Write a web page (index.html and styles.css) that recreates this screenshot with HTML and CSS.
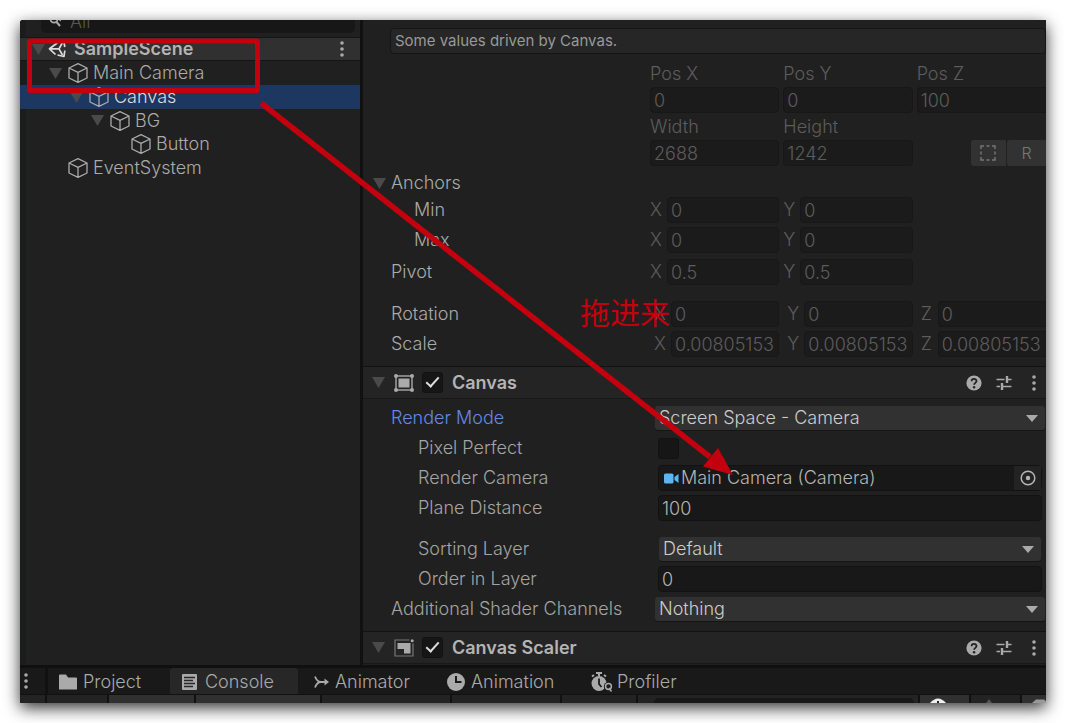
FILE: index.html
```html
<!DOCTYPE html>
<html lang="en">
<head>
<meta charset="utf-8">
<title>SampleScene</title>
<link rel="stylesheet" href="styles.css">
</head>
<body>
<svg class="defs" aria-hidden="true">
  <symbol id="cube" viewBox="0 0 20 20"><path d="M10 0.700 19 5V15L10 19.300 1 15V5ZM1 5 10 9.400 19 5M10 9.400V19" fill="none" stroke="currentColor" stroke-width="1.3" stroke-linejoin="round"/></symbol>
  <symbol id="fold" viewBox="0 0 13 11"><path d="M0 0H13L6.5 11Z" fill="currentColor"/></symbol>
  <symbol id="dots" viewBox="0 0 4 16"><g fill="currentColor"><circle cx="2" cy="2" r="1.8"/><circle cx="2" cy="8" r="1.8"/><circle cx="2" cy="14" r="1.8"/></g></symbol>
  <symbol id="help" viewBox="0 0 16 16"><circle cx="8" cy="8" r="7.6" fill="currentColor"/><path d="M5.6 6.2C5.6 3.2 10.5 3.2 10.5 6 10.5 7.9 8.1 7.8 8.1 9.8" fill="none" stroke="#222" stroke-width="1.8"/><circle cx="8.1" cy="12.2" r="1.2" fill="#222"/></symbol>
  <symbol id="preset" viewBox="0 0 16 16"><path d="M0.500 4.500H8.500M12 4.500H15.500M0.500 11.500H4M7 11.500H15.500" stroke="currentColor" stroke-width="1.6"/><path d="M11 1V8M6 8V15" stroke="currentColor" stroke-width="2.4"/></symbol>
</svg>
<main class="window">
  <div class="upper">
    <section class="hierarchy">
      <div class="search-row">
        <label class="search">
          <svg class="search-icon" viewBox="0 0 16 12"><circle cx="6" cy="3" r="3.6" fill="none" stroke="currentColor" stroke-width="1.7"/><path d="M8.500 6 12 10" stroke="currentColor" stroke-width="2"/><path d="M9.500 2H15L12.200 5.500Z" fill="currentColor"/></svg>
          <input type="text" placeholder="All" aria-label="Search">
        </label>
      </div>
      <div class="scene">
        <svg class="fold"><use href="#fold"/></svg>
        <svg class="unity" viewBox="0 0 18 18"><g fill="none" stroke="currentColor" stroke-width="1.700" stroke-linejoin="round"><path d="M9.500 2.800 1.500 8.800 7.500 14.500M1.500 8.800H11M11 8.800 14.500 2.500M11 8.800 14.500 15"/><path d="M11.500 1.800 15.800 1.200 16.800 7M16.800 10.500 16 16.500 9.500 15"/></g></svg>
        <span class="scene-name">SampleScene</span>
        <button class="icon-button" aria-label="Scene menu"><svg class="dots"><use href="#dots"/></svg></button>
      </div>
      <ul class="tree">
        <li class="node level-1"><svg class="fold"><use href="#fold"/></svg><svg class="cube"><use href="#cube"/></svg>Main Camera</li>
        <li class="node level-2 selected"><svg class="fold"><use href="#fold"/></svg><svg class="cube"><use href="#cube"/></svg>Canvas</li>
        <li class="node level-3"><svg class="fold"><use href="#fold"/></svg><svg class="cube"><use href="#cube"/></svg>BG</li>
        <li class="node level-4"><span class="fold"></span><svg class="cube"><use href="#cube"/></svg>Button</li>
        <li class="node level-1"><span class="fold"></span><svg class="cube"><use href="#cube"/></svg>EventSystem</li>
      </ul>
    </section>

    <section class="inspector">
      <div class="transform">
        <p class="note">Some values driven by Canvas.</p>
        <div class="row captions"><span></span><div class="cells"><label for="px">Pos X</label><label for="py">Pos Y</label><label for="pz">Pos Z</label></div></div>
        <div class="row tight"><span></span><div class="cells"><input id="px" value="0" disabled><input id="py" value="0" disabled><input id="pz" class="cut" value="100" disabled></div></div>
        <div class="row captions"><span></span><div class="cells"><label for="w">Width</label><label for="h">Height</label></div></div>
        <div class="row tight"><span></span><div class="cells"><input id="w" value="2688" disabled><input id="h" value="1242" disabled>
          <div class="modes"><button aria-label="Blueprint mode"><svg class="dash" viewBox="0 0 16 16"><path d="M1 4V1H4M12 1H15V4M15 12V15H12M4 15H1V12M6.500 1H9.500M6.500 15H9.500M1 6.500V9.500M15 6.500V9.500" fill="none" stroke="currentColor" stroke-width="1.400"/></svg></button><button>R</button></div></div></div>
        <div class="row"><span class="name"><svg class="fold"><use href="#fold"/></svg>Anchors</span></div>
        <div class="row near"><span class="name sub">Min</span><div class="cells"><label class="axis">X<input value="0" disabled></label><label class="axis">Y<input value="0" disabled></label></div></div>
        <div class="row"><span class="name sub">Max</span><div class="cells"><label class="axis">X<input value="0" disabled></label><label class="axis">Y<input value="0" disabled></label></div></div>
        <div class="row loose"><span class="name">Pivot</span><div class="cells"><label class="axis">X<input value="0.5" disabled></label><label class="axis">Y<input value="0.5" disabled></label></div></div>
        <div class="row apart"><span class="name">Rotation</span><div class="cells inset"><label class="axis">X<input value="0" disabled></label><label class="axis">Y<input value="0" disabled></label><label class="axis">Z<input class="cut" value="0" disabled></label></div></div>
        <div class="row"><span class="name">Scale</span><div class="cells inset"><label class="axis">X<input value="0.00805153" disabled></label><label class="axis">Y<input value="0.00805153" disabled></label><label class="axis">Z<input class="cut" value="0.00805153" disabled></label></div></div>
      </div>

      <header class="component">
        <svg class="fold"><use href="#fold"/></svg>
        <svg class="comp-icon" viewBox="0 0 20 18"><rect x="2" y="2" width="16" height="14" fill="none" stroke="currentColor" stroke-width="1.400"/><rect x="4.500" y="4.500" width="11" height="9" fill="currentColor"/><g fill="currentColor"><circle cx="2" cy="2" r="2"/><circle cx="18" cy="2" r="2"/><circle cx="2" cy="16" r="2"/><circle cx="18" cy="16" r="2"/></g></svg>
        <label class="enable"><input type="checkbox" checked>Canvas</label>
        <div class="tools"><button class="icon-button" aria-label="Help"><svg class="tool"><use href="#help"/></svg></button><button class="icon-button" aria-label="Presets"><svg class="tool"><use href="#preset"/></svg></button><button class="icon-button" aria-label="Menu"><svg class="dots"><use href="#dots"/></svg></button></div>
      </header>

      <div class="fields">
        <div class="row"><label class="name link" for="mode">Render Mode</label><div class="pick wide"><select id="mode"><option>Screen Space - Camera</option></select></div></div>
        <div class="row"><label class="name deep" for="pp">Pixel Perfect</label><div class="value"><input type="checkbox" id="pp"></div></div>
        <div class="row"><label class="name deep" for="cam">Render Camera</label><div class="value"><div class="object"><svg class="camera" viewBox="0 0 15 11"><rect width="9.500" height="10" y="0.500" rx="1.500" fill="currentColor"/><path d="M10.500 4 14.500 1V10L10.500 7Z" fill="currentColor"/></svg><input id="cam" value="Main Camera (Camera)"><button aria-label="Select camera"><svg class="target" viewBox="0 0 16 16"><circle cx="8" cy="8" r="6.800" fill="none" stroke="currentColor" stroke-width="1.500"/><circle cx="8" cy="8" r="2.200" fill="currentColor"/></svg></button></div></div></div>
        <div class="row"><label class="name deep" for="dist">Plane Distance</label><div class="value"><input id="dist" value="100"></div></div>
        <div class="row apart"><label class="name deep" for="layer">Sorting Layer</label><div class="pick"><select id="layer"><option>Default</option></select></div></div>
        <div class="row"><label class="name deep" for="order">Order in Layer</label><div class="value"><input id="order" value="0"></div></div>
        <div class="row"><label class="name" for="chan">Additional Shader Channels</label><div class="pick wide"><select id="chan"><option>Nothing</option></select></div></div>
      </div>

      <header class="component">
        <svg class="fold"><use href="#fold"/></svg>
        <svg class="comp-icon" viewBox="0 0 20 18"><path d="M15.500 1H1V17H19V4.500" fill="none" stroke="#777" stroke-width="1.200"/><path d="M3.500 4H16.500V14.500H10V10H3.500Z" fill="currentColor"/><circle cx="18.200" cy="1.800" r="1.500" fill="currentColor"/></svg>
        <label class="enable"><input type="checkbox" checked>Canvas Scaler</label>
        <div class="tools"><button class="icon-button" aria-label="Help"><svg class="tool"><use href="#help"/></svg></button><button class="icon-button" aria-label="Presets"><svg class="tool"><use href="#preset"/></svg></button><button class="icon-button" aria-label="Menu"><svg class="dots"><use href="#dots"/></svg></button></div>
      </header>
    </section>
  </div>

  <nav class="tabs">
    <button class="panel-menu" aria-label="Panel menu"><svg class="dots"><use href="#dots"/></svg></button>
    <button class="tab project"><svg class="tab-icon" viewBox="0 0 18 16"><path d="M0 1.500Q0 .5 1 .5H7L9 3.500H17Q18 3.500 18 4.500V15.500H0Z" fill="currentColor"/></svg>Project</button>
    <button class="tab console"><svg class="page-icon" viewBox="0 0 15 16"><rect width="15" height="16" rx="1" fill="currentColor"/><path d="M2 3.500H13M2 6.500H11M2 9.500H13M2 12.500H11" stroke="#272727" stroke-width="1.300"/></svg>Console</button>
    <button class="tab animator"><svg class="page-icon" viewBox="0 0 15 16"><path d="M1 2.500Q3 8 7 8H13.500M1 13.500Q3 8 7 8" fill="none" stroke="currentColor" stroke-width="1.800"/><path d="M10.500 4.500 15 8 10.500 11.500Z" fill="currentColor"/></svg>Animator</button>
    <button class="tab animation"><svg class="tab-icon" viewBox="0 0 18 18"><circle cx="9" cy="9" r="9" fill="currentColor"/><path d="M9 3V9H14.500" fill="none" stroke="#191919" stroke-width="2"/></svg>Animation</button>
    <button class="tab profiler"><svg class="watch" viewBox="0 0 22 20"><circle cx="8" cy="11.500" r="7.500" fill="currentColor"/><path d="M5 1H11M8 1V4M1 4.500 3 3M13 3 15 4.500" stroke="currentColor" stroke-width="2"/><path d="M8 6.500V12L10.500 15" fill="none" stroke="#191919" stroke-width="1.800"/><circle cx="17.500" cy="14.500" r="4.600" fill="#191919"/><circle cx="17.500" cy="14.500" r="2.900" fill="none" stroke="currentColor" stroke-width="1.500"/><path d="M18 16 20.500 19.500" stroke="currentColor" stroke-width="1.500"/></svg>Profiler</button>
  </nav>
  <div class="toolbar">
    <span class="seg s1"></span><span class="seg s2"></span><span class="seg s3 lit"></span><span class="seg s4 lit"></span><span class="seg s5"></span><span class="seg s6"></span><span class="seg s7"></span>
    <div class="log-search"><span class="log-input"></span></div>
    <span class="seg s8 lit"><svg class="count white" viewBox="0 0 16 5"><path d="M0 5Q8-4 16 5Z" fill="currentColor"/><path d="M8 3V5" stroke="#222" stroke-width="2"/></svg></span><span class="seg s8"><svg class="count faint" viewBox="0 0 16 5"><path d="M5 5 8 1 11 5Z" fill="currentColor"/></svg></span><span class="seg s9 lit"><svg class="count grey" viewBox="0 0 16 5"><path d="M0 5 4 1.500H12L16 5Z" fill="currentColor"/></svg></span>
  </div>

  <svg class="markup" viewBox="0 0 1026 683" aria-hidden="true">
    <rect x="9.500" y="21" width="228" height="49.500" rx="1" fill="none" stroke="#c4000e" stroke-width="5"/>
    <path d="M241 83 690 437" stroke="#c4000e" stroke-width="5.500"/>
    <path d="M713 455 683 446.500 698 428Z" fill="#c4000e"/>
  </svg>
  <span class="remark" lang="zh">拖进来</span>
</main>
</body>
</html>
```
FILE: styles.css
```css
* { box-sizing: border-box; }

body {
  margin: 0;
  padding: 20px;
  min-height: 100vh;
  display: flex;
  background: #fff;
  color: #aaa;
  font: 300 18px/24px Inter, "Noto Sans", sans-serif;
}

button, input, select { font: inherit; color: inherit; margin: 0; padding: 0; border: 0; background: none; }
svg { flex: none; display: block; }
.defs { position: absolute; width: 0; height: 0; }

.window {
  position: relative;
  flex: 1;
  min-width: 0;
  display: flex;
  flex-direction: column;
  border-radius: 3px 3px 0 0;
  background: #111;
  box-shadow: 0 5px 16px rgba(0, 0, 0, .8);
}
.upper { flex: 1; display: flex; gap: 3px; min-width: 0; }

/* Hierarchy */
.hierarchy { width: 340px; flex: none; background: #202020; border-left: 6px solid #1b1c1c; border-radius: 3px 0 0 0; }
.search-row { height: 17px; padding: 0 5px 4px 15px; }
.search { height: 13px; display: flex; padding-left: 7px; gap: 6px; background: #171717; border-radius: 0 0 5px 5px; overflow: hidden; }
.search-icon { width: 16px; height: 12px; margin-top: -4px; color: #aaa; }
.search input { min-width: 0; flex: 1; height: 24px; margin-top: -10px; outline: 0; }
.search input::placeholder { color: #555; opacity: 1; }
.scene {
  height: 24px;
  margin-left: -6px;
  padding: 0 16px 0 12px;
  display: flex;
  align-items: center;
  border-top: 1px solid #151515;
  border-bottom: 1px solid #151515;
  background: #303030;
}
.scene-name { flex: 1; padding-left: 8px; font-weight: 600; color: #b4b4b4; }
.unity { width: 18px; height: 18px; margin-left: 3px; color: #ddd; }
.icon-button { display: flex; }
.fold { flex: none; width: 13px; height: 11px; color: #4a4a4a; }
.dots { width: 4px; height: 16px; color: #aaa; }
.cube { width: 20px; height: 20px; margin: 0 5px 0 6px; color: #aaa; }
.tree { list-style: none; margin: 0; padding: 0; }
.node { height: 24px; margin-left: -6px; display: flex; align-items: center; }
.level-1 { padding-left: 29px; }
.level-2 { padding-left: 50px; }
.level-3 { padding-left: 71px; height: 23px; }
.level-4 { padding-left: 92px; }
.selected { background: #1c3760; color: #ddd; }

/* Inspector */
.inspector { flex: 1; min-width: 0; background: #212020; }
.transform { padding: 8px 0 9px; overflow: hidden; }
.note {
  height: 26px;
  margin: 0 0 7px 27px;
  padding: 0 4px;
  border: 1px solid #151515;
  border-radius: 4px;
  background: #262626;
  font-size: 15px;
  font-weight: 400;
  color: #999;
}
.row { display: flex; height: 26px; margin-top: 4px; align-items: center; }
.row > :first-child { width: 287px; flex: none; }
.captions { height: 27px; color: #555; }
.note + .captions { height: 26px; }
.row.tight, .row.captions { margin-top: 0; }
.row.near { margin-top: 1px; }
.row.loose { margin-top: 6px; }
.row.apart { margin-top: 16px; }
.name { padding-left: 28px; display: flex; align-items: center; white-space: nowrap; }
.name .fold { margin: 0 5px 0 -18px; }
.sub { padding-left: 51px; }
.deep { padding-left: 55px; }
.link { color: #628ae6; }
.cells { flex: 1; min-width: 0; display: grid; grid-template-columns: repeat(3, minmax(0, 1fr)); gap: 4px; align-items: center; color: #5c5c5c; }
.axis { display: flex; align-items: center; min-width: 0; }
.inset .axis { padding-left: 4px; }
.axis input { margin-left: auto; width: calc(100% - 17px); }

input:not([type="checkbox"]) { min-width: 0; }
.cells input, .value > input:not([type="checkbox"]), .object {
  height: 26px;
  border: 1px solid #171717;
  border-radius: 4px;
  background: #1c1b1b;
  padding: 0 3px;
}
.cells > input { width: 100%; }
.cells .cut { border-right: 0; border-radius: 4px 0 0 4px; }
.modes { justify-self: end; display: flex; gap: 1px; height: 26px; color: #777; }
.modes button { width: 35px; background: #323232; border-radius: 3px 0 0 3px; display: flex; align-items: center; justify-content: center; }
.modes button + button { width: 39px; font-size: 16px; }
.dash { width: 16px; height: 16px; }

.component {
  height: 33px;
  padding: 0 10px 0 9px;
  display: flex;
  align-items: center;
  border-top: 1px solid #121212;
  border-bottom: 1px solid #181818;
  background: #252424;
}
.comp-icon { width: 20px; height: 18px; margin-left: 9px; }
.enable { flex: 1; display: flex; align-items: center; gap: 9px; margin-left: 8px; font-weight: 600; color: #b4b4b4; }
.tools { display: flex; gap: 14px; align-items: center; }
.tools .icon-button:last-child { margin-left: 6px; }
.tool { width: 16px; height: 16px; }
input[type="checkbox"] { appearance: none; width: 21px; height: 21px; border: 1px solid #121212; border-radius: 3px; background: #171616; display: grid; place-items: center; }
input[type="checkbox"]:checked::after { content: ""; width: 5px; height: 11px; margin-bottom: 4px; border: solid #ddd; border-width: 0 2px 2px 0; rotate: 42deg; }

.fields { padding: 2px 0 9px; color: #a4a4a4; }
.fields .row.apart { margin-top: 15px; }
.value { flex: 1; display: flex; padding: 0 4px 0 8px; min-width: 0; color: #b4b4b4; }
.value > input:not([type="checkbox"]) { width: 100%; background: #191818; border-color: #121212; }
.object { flex: 1; display: flex; align-items: center; background: #191818; border-color: #121212; padding: 0 0 0 5px; }
.object input { flex: 1; padding-left: 2px; }
.object button { width: 27px; height: 24px; display: grid; place-items: center; background: #242323; }
.camera { width: 15px; height: 11px; color: #5bb5f0; }
.target { width: 16px; height: 16px; }
.pick { flex: 1; display: flex; position: relative; margin: 0 5px 0 9px; }
.pick.wide { margin: 0 1px 0 5px; }
.pick select { appearance: none; width: 100%; height: 24px; padding: 0 4px; border-radius: 3px; background: #323131; box-shadow: 0 1px #151515; color: #ccc; }
.pick::after { content: ""; position: absolute; right: 7px; top: 9px; border: solid transparent; border-width: 7px 6px 0; border-top-color: #aaa; }

/* Bottom panel */
.tabs { height: 30px; border-top: 3px solid #101010; border-bottom: 1px solid #111; display: flex; background: #191919; }
.panel-menu { width: 28px; padding-left: 4px; border-right: 3px solid #111; display: flex; align-items: center; }
.tab { display: flex; align-items: center; gap: 6px; padding: 1px 0 0 11px; }
.tab-icon { width: 18px; height: 18px; }
.page-icon { width: 15px; height: 16px; }
.watch { width: 22px; height: 20px; }
.project { width: 122px; }
.console { width: 128px; padding-left: 12px; gap: 8px; background: #272727; border-radius: 3px 3px 0 0; }
.animator { width: 138px; padding-left: 16px; }
.animation { width: 144px; }
.profiler { gap: 4px; }
.toolbar { height: 8px; display: flex; gap: 2px; overflow: hidden; }
.seg { background: #232323; }
.lit { background: #303030; }
.s1 { width: 25px; }
.s2 { width: 60px; }
.s3 { width: 85px; }
.s4 { width: 124px; }
.s5 { width: 128px; }
.s6 { width: 108px; }
.s7 { width: 74px; }
.s8 { width: 49px; padding-left: 10px; }
.s9 { width: 24px; padding-left: 10px; }
.log-search { flex: 1; padding: 3px 4px 0 16px; display: flex; background: #232323; }
.log-input { flex: 1; background: #171717; border-radius: 6px 6px 0 0; }
.count { width: 16px; height: 5px; margin-top: 3px; }
.white { color: #eee; }
.faint { color: #555; }
.grey { color: #999; }

/* Red annotations over the window */
.markup { position: absolute; left: 0; top: 0; width: 1026px; height: 683px; pointer-events: none; }
.remark { position: absolute; left: 560px; top: 276px; font: 400 30px/30px "Noto Sans CJK SC", sans-serif; color: #c4000e; }
```
